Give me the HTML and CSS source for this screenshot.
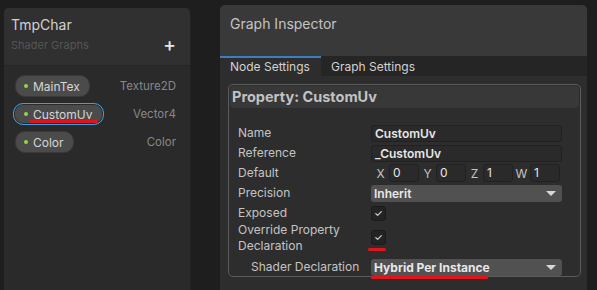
FILE: index.html
```html
<!DOCTYPE html>
<html lang="en">
<head>
    <meta charset="UTF-8">
    <title>Shader Graph - Blackboard / Inspector</title>
    <link rel="stylesheet" href="styles.css">
</head>
<body>
    <div class="workspace">
        <!-- blackboard -->
        <section class="blackboard">
            <header class="bb-head">
                <h1>TmpChar</h1>
                <div class="bb-sub">
                    <span>Shader Graphs</span>
                    <span class="plus">+</span>
                </div>
            </header>
            <ul class="props">
                <li>
                    <span class="pill"><i class="dot"></i>MainTex</span>
                    <span class="type">Texture2D</span>
                </li>
                <li>
                    <span class="pill selected"><i class="dot"></i>CustomUv<b class="mark"></b></span>
                    <span class="type">Vector4</span>
                </li>
                <li>
                    <span class="pill"><i class="dot"></i>Color</span>
                    <span class="type">Color</span>
                </li>
            </ul>
        </section>

        <!-- inspector -->
        <section class="inspector">
            <header class="insp-head">Graph Inspector</header>
            <nav class="tabs">
                <span class="tab active">Node Settings</span>
                <span class="tab">Graph Settings</span>
            </nav>
            <div class="insp-body">
                <div class="prop-box">
                    <div class="prop-title">Property: CustomUv</div>
                    <div class="rows">
                        <div class="row">
                            <label>Name</label>
                            <div class="field">CustomUv</div>
                        </div>
                        <div class="row">
                            <label>Reference</label>
                            <div class="field">_CustomUv</div>
                        </div>
                        <div class="row">
                            <label>Default</label>
                            <div class="vec">
                                <span>X</span><div class="field small">0</div>
                                <span>Y</span><div class="field small">0</div>
                                <span>Z</span><div class="field small">1</div>
                                <span>W</span><div class="field small">1</div>
                            </div>
                        </div>
                        <div class="row">
                            <label>Precision</label>
                            <div class="drop">Inherit<i class="arrow"></i></div>
                        </div>
                        <div class="row">
                            <label>Exposed</label>
                            <div class="check">&#10003;</div>
                        </div>
                        <div class="row tall">
                            <label>Override Property<br>Declaration</label>
                            <div class="check marked">&#10003;<b class="mark"></b></div>
                        </div>
                        <div class="row">
                            <label class="indent">Shader Declaration</label>
                            <div class="drop bold marked">Hybrid Per Instance<i class="arrow"></i><b class="mark long"></b></div>
                        </div>
                    </div>
                </div>
            </div>
        </section>
    </div>
</body>
</html>
```

FILE: styles.css
```css
body{
    margin:0;
    background-color:#1e1e1e;
    font-family:Inter, "Noto Sans", sans-serif;
    font-size:12px;
    color:#c8c8c8;
    height:290px;
    overflow:hidden;
}

.workspace{
    display:flex;
    height:100%;
}

/* blackboard */
.blackboard{
    width:186px;
    margin:8px 0 0 4px;
    background-color:#2a2a2a;
    border-radius:5px 5px 0 0;
    border-right:1px solid #232323;
}

.bb-head{
    background-color:#303030;
    border-radius:5px 5px 0 0;
    height:57px;
    padding:0 14px 0 7px;
    border-bottom:1px solid #262626;

    h1{
        margin:0;
        padding-top:8px;
        font-size:14px;
        font-weight:400;
        color:#d2d2d2;
        line-height:18px;
    }
}

.bb-sub{
    display:flex;
    justify-content:space-between;
    align-items:center;
    margin-top:4px;
    color:#555;
    font-size:11px;

    .plus{
        color:#e8e8e8;
        font-size:19px;
        font-weight:500;
        line-height:14px;
    }
}

.props{
    list-style:none;
    margin:0;
    padding:6px 14px 0 10px;

    li{
        display:flex;
        justify-content:space-between;
        align-items:center;
        height:28px;
    }
}

.pill{
    position:relative;
    display:flex;
    align-items:center;
    gap:5px;
    height:20px;
    padding:0 9px 0 8px;
    margin-left:1px;
    background-color:#4b4b4b;
    border:1px solid #3a3a3a;
    border-radius:10px;
    color:#d6d6d6;
    font-size:12px;

    &.selected{
        margin-left:-1px;
        padding:0 11px 0 10px;
        height:20px;
        border:1px solid #3c9fe0;
        box-shadow:0 0 0 1px #2a2a2a inset;
    }
}

.dot{
    width:4px;
    height:4px;
    border-radius:50%;
    background-color:#8fd64c;
}

.type{
    color:#888;
    font-size:11.5px;
}

.mark{
    position:absolute;
    height:3px;
    border-radius:2px;
    background-color:#e0141a;
}

.pill .mark{
    left:15px;
    right:5px;
    bottom:1px;
}

/* inspector */
.inspector{
    width:367px;
    margin:5px 0 0 29px;
    background-color:#2d2d2d;
    border-radius:5px 5px 0 0;
}

.insp-head{
    height:51px;
    background-color:#393939;
    border-radius:5px 5px 0 0;
    padding:10px 10px 0;
    box-sizing:border-box;
    font-size:14px;
    color:#c4c4c4;
}

.tabs{
    display:flex;
    height:20px;
    background-color:#252525;
    font-size:12px;
    color:#d2d2d2;
}

.tab{
    padding:0 10px;
    line-height:18px;
    white-space:nowrap;
    border-top:2px solid transparent;

    &.active{
        width:101px;
        box-sizing:border-box;
        background-color:#2d2d2d;
        border-top-color:#3d7ec0;
    }
}

.insp-body{
    padding:8px 6px 0 8px;
}

.prop-box{
    border:1px solid #5c5c5c;
    border-radius:5px;
    padding:1px 1px 0;
    height:190px;
}

.prop-title{
    background-color:#383838;
    border-radius:4px;
    height:22px;
    line-height:22px;
    padding-left:2px;
    font-weight:700;
    font-size:14.5px;
    color:#c2c2c2;
}

.rows{
    padding:15px 17px 0 8px;
}

.row{
    display:grid;
    grid-template-columns:133px 1fr;
    align-items:center;
    height:20px;

    label{
        color:#c4c4c4;
        font-size:12px;
        line-height:16px;
    }

    &.tall{
        height:34px;
        align-items:start;
        margin-top:-1px;
        margin-bottom:1px;

        .check{
            margin-top:8px;
        }
    }
}

.indent{
    padding-left:13px;
}

.field{
    height:17px;
    line-height:15px;
    background-color:#2a2a2a;
    border:1px solid #212121;
    border-radius:3px;
    padding-left:3px;
    color:#e6e6e6;
    font-weight:600;
    font-size:12px;
    box-sizing:border-box;

    &.small{
        width:30px;
        height:18px;
        line-height:16px;
        font-weight:400;
    }
}

.vec{
    display:flex;
    align-items:center;
    gap:2px;

    span{
        width:13px;
        text-align:center;
        color:#c4c4c4;
        font-size:12px;
    }
    span:first-child{
        margin-left:3px;
    }
}

.drop{
    position:relative;
    height:17px;
    line-height:17px;
    background-color:#515151;
    border-radius:3px;
    padding-left:3px;
    color:#e8e8e8;
    font-weight:600;
    font-size:12px;

    &.bold{
        font-weight:700;
    }
}

.arrow{
    position:absolute;
    right:6px;
    top:6px;
    width:0;
    height:0;
    border-left:5px solid transparent;
    border-right:5px solid transparent;
    border-top:5px solid #d8d8d8;
}

.drop .mark.long{
    left:0;
    width:117px;
    bottom:-3px;
}

.check{
    position:relative;
    width:13px;
    height:13px;
    background-color:#232323;
    border:1px solid #1a1a1a;
    border-radius:3px;
    color:#f0f0f0;
    font-size:10px;
    line-height:13px;
    text-align:center;

    .mark{
        left:-4px;
        width:18px;
        bottom:-7px;
    }
}
```
